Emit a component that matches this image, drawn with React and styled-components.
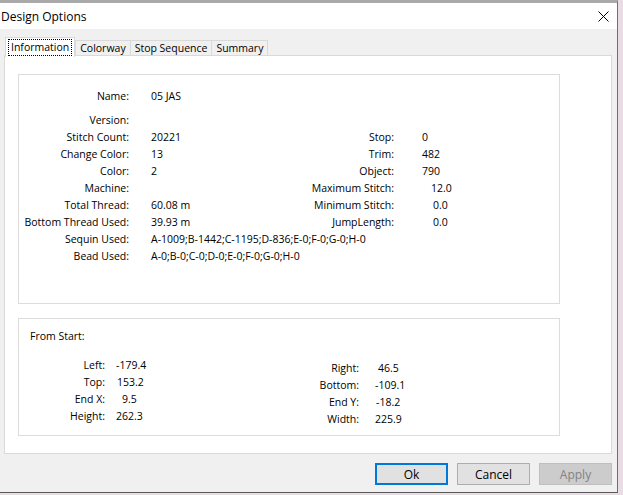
import React from 'react';
import styled, { createGlobalStyle } from 'styled-components';

const GlobalStyle = createGlobalStyle`
  html, body {
    margin: 0;
    padding: 0;
    background: #e9dce4;
  }
  body {
    font-family: "Open Sans", "Noto Sans", "DejaVu Sans", sans-serif;
    font-size: 10.5px;
    color: #000;
  }
`;

const leftRows = [
  ['Name:', '05 JAS'],
  ['Version:', ''],
];

// label, value, right label, right value, right value offset
const pairedRows = [
  ['Stitch Count:', '20221', 'Stop:', '0', 28],
  ['Change Color:', '13', 'Trim:', '482', 28],
  ['Color:', '2', 'Object:', '790', 28],
  ['Machine:', '', 'Maximum Stitch:', '12.0', 37],
  ['Total Thread:', '60.08 m', 'Minimum Stitch:', '0.0', 39],
  ['Bottom Thread Used:', '39.93 m', 'JumpLength:', '0.0', 39],
];

const longRows = [
  ['Sequin Used:', 'A-1009;B-1442;C-1195;D-836;E-0;F-0;G-0;H-0'],
  ['Bead Used:', 'A-0;B-0;C-0;D-0;E-0;F-0;G-0;H-0'],
];

const startLeft = [
  ['Left:', '-179.4', 11],
  ['Top:', '153.2', 12],
  ['End X:', '9.5', 17],
  ['Height:', '262.3', 11],
];

const startRight = [
  ['Right:', '46.5', 19],
  ['Bottom:', '-109.1', 16],
  ['End Y:', '-18.2', 17],
  ['Width:', '225.9', 16],
];

const tabs = ['Information', 'Colorway', 'Stop Sequence', 'Summary'];

const App = () => {
  return (
    <>
      <GlobalStyle />
      <Window>
        <TitleBar>
          <Title>Design Options</Title>
          <CloseButton aria-label="Close">
            <svg width="11" height="11" viewBox="0 0 11 11">
              <path d="M0.5 0.5 L10.5 10.5 M10.5 0.5 L0.5 10.5" stroke="#000" strokeWidth="1" />
            </svg>
          </CloseButton>
        </TitleBar>
        <Body>
          <TabStrip>
            {tabs.map((t, i) => (
              <Tab key={t} active={i === 0}>
                {i === 0 ? <Focus>{t}</Focus> : t}
              </Tab>
            ))}
          </TabStrip>
          <Panel>
            <InfoGroup>
              <InfoGrid>
                {leftRows.map(([l, v], i) => (
                  <React.Fragment key={l}>
                    <Label top={i === 0}>{l}</Label>
                    <Value span={3} top={i === 0}>{v}</Value>
                  </React.Fragment>
                ))}
                {pairedRows.map(([l1, v1, l2, v2, pad]) => (
                  <React.Fragment key={l1}>
                    <Label>{l1}</Label>
                    <Value>{v1}</Value>
                    <Label>{l2}</Label>
                    <Value pad={pad}>{v2}</Value>
                  </React.Fragment>
                ))}
                {longRows.map(([l, v]) => (
                  <React.Fragment key={l}>
                    <Label>{l}</Label>
                    <Value span={3}>{v}</Value>
                  </React.Fragment>
                ))}
              </InfoGrid>
            </InfoGroup>
            <StartGroup>
              <GroupTitle>From Start:</GroupTitle>
              <StartColumns>
                <StartGrid labelWidth={86}>
                  {startLeft.map(([l, v, pad]) => (
                    <React.Fragment key={l}>
                      <Label>{l}</Label>
                      <Value pad={pad}>{v}</Value>
                    </React.Fragment>
                  ))}
                </StartGrid>
                <StartGrid labelWidth={140} shift={3}>
                  {startRight.map(([l, v, pad]) => (
                    <React.Fragment key={l}>
                      <Label>{l}</Label>
                      <Value pad={pad}>{v}</Value>
                    </React.Fragment>
                  ))}
                </StartGrid>
              </StartColumns>
            </StartGroup>
          </Panel>
          <ButtonRow>
            <Button variant="default">Ok</Button>
            <Button>Cancel</Button>
            <Button variant="disabled" disabled>Apply</Button>
          </ButtonRow>
        </Body>
      </Window>
    </>
  );
};

const Window = styled.div`
  width: 617px;
  height: 489px;
  border-top: 3px solid #a9a9a9;
  border-right: 1px solid #6f6f6f;
  border-bottom: 1px solid #5a5a5a;
  background: #f0f0f0;
  display: flex;
  flex-direction: column;
`;

const TitleBar = styled.div`
  height: 26px;
  background: #ffffff;
  display: flex;
  align-items: center;
  justify-content: space-between;
`;

const Title = styled.div`
  font-size: 12px;
  padding-left: 1px;
  margin-top: 1px;
`;

const CloseButton = styled.div`
  width: 46px;
  height: 26px;
  display: flex;
  align-items: center;
  justify-content: center;
  margin-right: -9px;
`;

const Body = styled.div`
  flex: 1;
  display: flex;
  flex-direction: column;
  padding: 8px 5px 0 4px;
`;

const TabStrip = styled.div`
  display: flex;
  align-items: flex-end;
  height: 19px;
  padding-left: 1px;
  position: relative;
  z-index: 1;
  margin-bottom: -1px;
`;

const Tab = styled.div`
  height: ${(p) => (p.active ? '20px' : '16px')};
  padding: ${(p) => (p.active ? '0 2px' : '0 4px')};
  background: ${(p) => (p.active ? '#ffffff' : '#f0f0f0')};
  border: 1px solid #d9d9d9;
  border-bottom: ${(p) => (p.active ? 'none' : '1px solid #d9d9d9')};
  margin-left: ${(p) => (p.active ? '0' : '-1px')};
  margin-bottom: ${(p) => (p.active ? '-1px' : '0')};
  display: flex;
  align-items: center;
  box-sizing: border-box;
  white-space: nowrap;
  &:nth-child(2) {
    margin-left: 0;
  }
`;

const Focus = styled.span`
  border: 1px dotted #000;
  padding: 0 2px;
  line-height: 15px;
`;

const Panel = styled.div`
  height: 399px;
  background: #ffffff;
  border: 1px solid #d9d9d9;
  box-sizing: border-box;
  padding: 18px 51px 0 13px;
  display: flex;
  flex-direction: column;
  gap: 14px;
`;

const Group = styled.div`
  border: 1px solid #dcdcdc;
  box-sizing: border-box;
`;

const InfoGroup = styled(Group)`
  height: 230px;
  padding-top: 14px;
`;

const InfoGrid = styled.div`
  display: grid;
  grid-template-columns: 110px 172px 93px auto;
  grid-template-rows: 22px;
  grid-auto-rows: 17px;
  align-items: center;
`;

const Label = styled.div`
  text-align: right;
  white-space: nowrap;
  align-self: ${(p) => (p.top ? 'start' : 'center')};
`;

const Value = styled.div`
  white-space: nowrap;
  padding-left: ${(p) => p.pad ?? 22}px;
  grid-column: span ${(p) => p.span || 1};
  align-self: ${(p) => (p.top ? 'start' : 'center')};
`;

const StartGroup = styled(Group)`
  height: 118px;
  padding: 9px 0 0 11px;
`;

const GroupTitle = styled.div`
  line-height: 17px;
  margin-bottom: 11px;
`;

const StartColumns = styled.div`
  display: grid;
  grid-template-columns: 200px auto;
  margin-left: -11px;
`;

const StartGrid = styled.div`
  display: grid;
  grid-template-columns: ${(p) => p.labelWidth}px auto;
  grid-auto-rows: 17px;
  align-items: center;
  align-content: start;
  margin-top: ${(p) => p.shift || 0}px;
`;

const ButtonRow = styled.div`
  display: flex;
  justify-content: flex-end;
  gap: 9px;
  padding-top: 9px;
`;

const Button = styled.button`
  width: 73px;
  height: 22px;
  font-family: inherit;
  font-size: 12px;
  padding: 0;
  background: ${(p) => (p.variant === 'disabled' ? '#cccccc' : '#e1e1e1')};
  color: ${(p) => (p.variant === 'disabled' ? '#838383' : '#000')};
  border: ${(p) =>
    p.variant === 'default'
      ? '2px solid #0078d7'
      : p.variant === 'disabled'
      ? '1px solid #bfbfbf'
      : '1px solid #adadad'};
  box-sizing: border-box;
`;

export default App;
